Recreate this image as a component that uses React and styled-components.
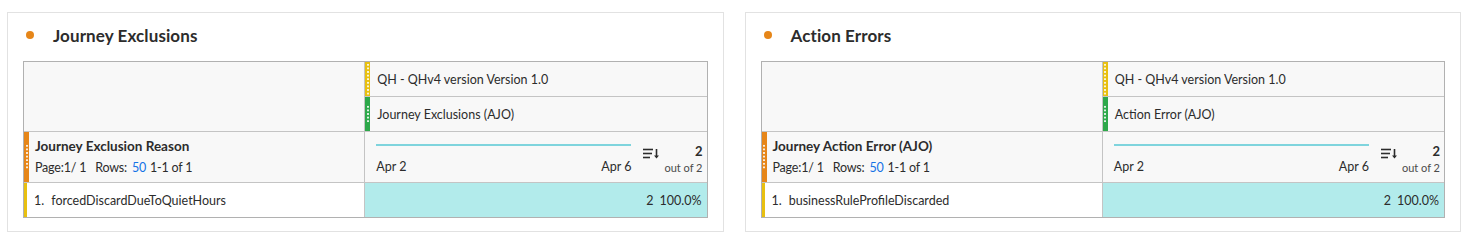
import React from 'react';
import styled, { createGlobalStyle } from 'styled-components';

const Global = createGlobalStyle`
  html, body { margin:0; padding:0; background:#fff; }
  body { font-family: Lato, "Noto Sans", "Liberation Sans", sans-serif; color:#2c2c2c; }
`;

const Page = styled.div`
  display:flex; gap:21px; padding:12px 13px 0 7px;
`;

const Panel = styled.section`
  flex:1; min-width:0; height:220px; box-sizing:border-box;
  border:1px solid #e2e2e2; padding:10px 15px 0 15px; background:#fff;
`;

const Title = styled.h3`
  display:flex; align-items:center; gap:19px; margin:0 0 14px; padding-left:3px;
  height:24px; font-size:17px; font-weight:700; color:#2c2c2c; letter-spacing:.1px;
  &::before { content:''; width:8px; height:8px; border-radius:50%; background:#e68619; }
`;

const Table = styled.div`
  display:grid; grid-template-columns:1fr 1fr; grid-template-rows:35px 35px 51px 34px;
  border:1px solid #b1b1b1; box-sizing:border-box;
`;

const Corner = styled.div`
  grid-row:1 / span 2; background:#f8f8f8; border-right:1px solid #c4c4c4; border-bottom:1px solid #c4c4c4;
`;

const Handle = styled.div`
  position:relative; display:flex; align-items:center;
  background:${p=>p.$bg||'#f8f8f8'};
  padding-left:${p=>p.$pad||12}px;
  ${p=>p.$line ? 'border-bottom:1px solid #c4c4c4;' : ''}
  ${p=>p.$divider ? 'border-right:1px solid #c4c4c4;' : ''}
  &::before {
    content:''; position:absolute; left:0; top:0; bottom:0; width:${p=>p.$bar}px; background:${p=>p.$color};
  }
  &::after {
    content:''; position:absolute; left:${p=>(p.$bar-2)/2}px; width:2px;
    top:${p=>p.$dotTop}; bottom:${p=>p.$dotBottom};
    display:${p=>p.$dots?'block':'none'};
    background-image:radial-gradient(circle, rgba(255,255,255,.85) 0.9px, transparent 1.1px);
    background-size:2px 3.6px;
  }
`;

const MetricLabel = styled.span`
  font-size:12.5px; color:#2c2c2c;
`;

const DimHead = styled.div`
  display:flex; flex-direction:column; gap:6px; margin-top:-2px;
`;

const DimName = styled.div`
  font-size:13.5px; font-weight:700; color:#2c2c2c;
`;

const Pager = styled.div`
  font-size:12.5px; color:#2c2c2c; letter-spacing:-.2px;
  span { margin-left:9px; }
  b { font-weight:400; color:#1473e6; margin:0 4px 0 5px; }
`;

const ChartCell = styled.div`
  display:flex; align-items:stretch; gap:11px; background:#f8f8f8; padding:0 4px 0 11px;
  border-bottom:1px solid #c4c4c4;
`;

const Spark = styled.div`
  flex:1; display:flex; flex-direction:column; padding-top:12px;
  &::before { content:''; height:2px; background:#7fd4dd; }
`;

const Axis = styled.div`
  display:flex; justify-content:space-between; font-size:12.5px; margin-top:13px;
`;

const Summary = styled.div`
  display:flex; align-items:flex-start; gap:5px; padding-top:13px;
`;

const Total = styled.div`
  text-align:right; line-height:1;
  strong { display:block; font-size:13px; font-weight:700; }
  small { display:block; font-size:11px; color:#4b4b4b; margin-top:4px; }
`;

const RowLabel = styled.span`
  font-size:12.5px;
  em { font-style:normal; margin-right:7px; }
`;

const ValueCell = styled.div`
  display:flex; align-items:center; justify-content:flex-end; gap:6px;
  background:#b2ebeb; padding-right:5px; font-size:12.5px;
`;

const SortIcon = () => (
  <svg width="17" height="11" viewBox="0 0 17 11" style={{marginTop:3}}>
    <g stroke="#2c2c2c" strokeWidth="1.6" fill="none">
      <line x1="1" y1="1.5" x2="11" y2="1.5" />
      <line x1="1" y1="5.5" x2="10" y2="5.5" />
      <line x1="1" y1="9.5" x2="8" y2="9.5" />
      <line x1="14.5" y1="1" x2="14.5" y2="9" />
    </g>
    <path d="M12 7.5 L14.5 10.5 L17 7.5 Z" fill="#2c2c2c" />
  </svg>
);

function Freeform({ title, metric, dimension, item }){
  return (
    <Panel>
      <Title>{title}</Title>
      <Table>
        <Corner />
        <Handle $bar={5} $color="#e8c010" $line $dots $dotTop="1px" $dotBottom="1px" $pad={12}>
          <MetricLabel>QH - QHv4 version Version 1.0</MetricLabel>
        </Handle>
        <Handle $bar={5} $color="#2da84a" $line $dots $dotTop="8px" $dotBottom="8px" $pad={12}>
          <MetricLabel>{metric}</MetricLabel>
        </Handle>
        <Handle $bar={5} $color="#e68619" $line $divider $dots $dotTop="12px" $dotBottom="12px" $pad={11}>
          <DimHead>
            <DimName>{dimension}</DimName>
            <Pager>Page:1/ 1<span>Rows:</span><b>50</b>1-1 of 1</Pager>
          </DimHead>
        </Handle>
        <ChartCell>
          <Spark>
            <Axis><span>Apr 2</span><span>Apr 6</span></Axis>
          </Spark>
          <Summary>
            <SortIcon />
            <Total><strong>2</strong><small>out of 2</small></Total>
          </Summary>
        </ChartCell>
        <Handle $bar={3} $color="#e8c010" $bg="#fff" $divider $pad={10}>
          <RowLabel><em>1.</em>{item}</RowLabel>
        </Handle>
        <ValueCell><span>2</span><span>100.0%</span></ValueCell>
      </Table>
    </Panel>
  );
}

export default function App(){
  return (
    <>
      <Global />
      <Page>
        <Freeform title="Journey Exclusions" metric="Journey Exclusions (AJO)" dimension="Journey Exclusion Reason" item="forcedDiscardDueToQuietHours" />
        <Freeform title="Action Errors" metric="Action Error (AJO)" dimension="Journey Action Error (AJO)" item="businessRuleProfileDiscarded" />
      </Page>
    </>
  );
}
